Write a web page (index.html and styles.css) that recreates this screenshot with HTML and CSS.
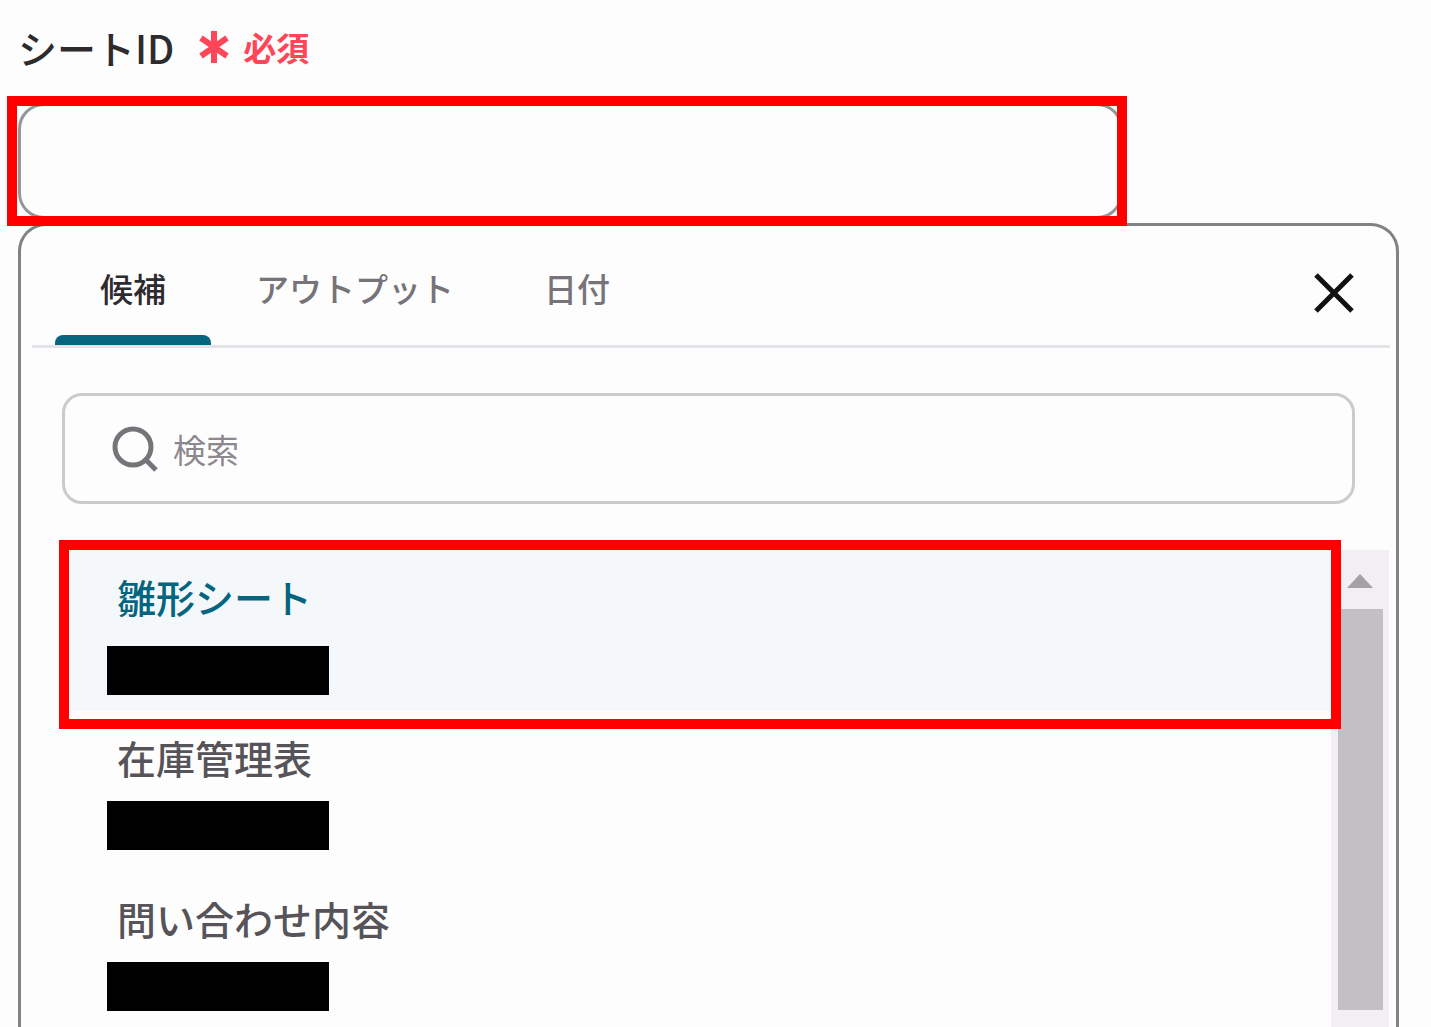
FILE: index.html
```html
<!DOCTYPE html>
<html lang="ja">
<head>
<meta charset="utf-8">
<meta name="viewport" content="width=device-width, initial-scale=1">
<title>シートID</title>
<link rel="stylesheet" href="styles.css">
</head>
<body>
<main class="page">
  <div class="label-row">
    <label class="label" for="sheet-id">シートID</label>
    <span class="required">
      <svg class="required-mark" viewBox="0 0 30 34" aria-hidden="true"><path d="M15 1v32M2 8l26 18M28 8L2 26"/></svg>
      必須
    </span>
  </div>
  <div class="field marked">
    <input class="field-input" id="sheet-id" type="text" required>
  </div>

  <section class="panel">
    <header class="panel-header">
      <div class="tabs" role="tablist">
        <button class="tab tab-active" type="button" role="tab" aria-selected="true">候補</button>
        <button class="tab" type="button" role="tab" aria-selected="false">アウトプット</button>
        <button class="tab" type="button" role="tab" aria-selected="false">日付</button>
      </div>
      <button class="close" type="button" aria-label="閉じる">
        <svg class="close-icon" viewBox="0 0 40 40" aria-hidden="true"><path d="M2 2l36 36M38 2L2 38"/></svg>
      </button>
    </header>

    <div class="search">
      <svg class="search-icon" viewBox="0 0 46 46" aria-hidden="true"><circle cx="21" cy="21" r="18"/><path d="M33 33l11 11"/></svg>
      <input class="search-input" type="search" placeholder="検索" aria-label="検索">
    </div>

    <div class="results">
      <ul class="options">
        <li class="option option-selected marked">
          <button class="option-button" type="button">雛形シート<span class="redacted"></span></button>
        </li>
        <li class="option">
          <button class="option-button" type="button">在庫管理表<span class="redacted"></span></button>
        </li>
        <li class="option">
          <button class="option-button" type="button">問い合わせ内容<span class="redacted"></span></button>
        </li>
      </ul>
      <div class="scrollbar" aria-hidden="true">
        <svg class="scroll-arrow" viewBox="0 0 26 14"><path d="M13 0l13 14H0z"/></svg>
        <div class="scroll-thumb"></div>
      </div>
    </div>
  </section>
</main>
</body>
</html>
```

FILE: styles.css
```css
* {
  box-sizing: border-box;
}

body {
  margin: 0;
  background: #fefdfe;
  color: #2d2b2e;
  font-family: "Noto Sans CJK JP", sans-serif;
}

button,
input {
  margin: 0;
  padding: 0;
  border: 0;
  background: none;
  color: inherit;
  font: inherit;
}

.page {
  display: flex;
  flex-direction: column;
  height: 100vh;
  padding: 0 32px 0 18px;
  overflow: hidden;
}

.label-row {
  display: flex;
  align-items: center;
  gap: 25px;
  height: 96px;
  flex: none;
  padding-bottom: 2px;
}

.label {
  font-size: 39px;
  font-weight: 500;
  line-height: 48px;
}

.required {
  display: flex;
  align-items: center;
  gap: 14px;
  color: #ff4658;
  font-size: 33px;
  font-weight: 700;
  line-height: 48px;
}

.required-mark {
  width: 30px;
  height: 34px;
  fill: none;
  stroke: currentColor;
  stroke-width: 6;
}

/* Red frame drawn over the element it points out */
.marked {
  position: relative;
}

.marked::after {
  content: "";
  position: absolute;
  z-index: 2;
  border: 10px solid #ff0000;
  pointer-events: none;
}

.field {
  flex: none;
  width: 80%;
  margin: 7px 0 4px;
}

.field::after {
  inset: -7px -4px -7px -11px;
}

.field-input {
  display: block;
  width: 100%;
  height: 116px;
  padding: 0 32px;
  border: 3px solid #97959a;
  border-radius: 26px;
  font-size: 39px;
}

.panel {
  display: flex;
  flex: 1;
  flex-direction: column;
  min-height: 0;
  border: 3px solid #838185;
  border-bottom: 0;
  border-radius: 28px 28px 0 0;
}

.panel-header {
  display: flex;
  flex: none;
  justify-content: space-between;
  height: 122px;
  margin: 0 6px 0 11px;
  padding: 0 34px 0 23px;
  border-bottom: 3px solid #e5e3e7;
}

.tabs {
  display: flex;
}

.tab {
  padding: 14px 45px 0;
  border-bottom: 10px solid transparent;
  color: #767478;
  font-size: 33px;
  font-weight: 500;
  line-height: 48px;
}

.tab-active {
  position: relative;
  color: #2d2b2e;
}

.tab-active::after {
  content: "";
  position: absolute;
  inset: auto 0 -10px;
  height: 10px;
  border-radius: 8px 8px 0 0;
  background: #05657f;
}

.close {
  align-self: center;
  padding-top: 14px;
}

.close-icon {
  display: block;
  width: 44px;
  height: 40px;
  fill: none;
  stroke: #111111;
  stroke-width: 5;
}

.search {
  display: flex;
  flex: none;
  align-items: center;
  gap: 15px;
  height: 111px;
  margin: 45px 41px 46px;
  padding: 0 47px;
  border: 3px solid #cccacd;
  border-radius: 20px;
}

.search-icon {
  flex: none;
  width: 46px;
  height: 46px;
  fill: none;
  stroke: #767478;
  stroke-width: 5;
}

.search-input {
  flex: 1;
  min-width: 0;
  font-size: 33px;
  line-height: 48px;
}

.search-input::placeholder {
  color: #8b898d;
  opacity: 1;
}

.results {
  display: flex;
  flex: 1;
  min-height: 0;
  padding: 0 7px 0 48px;
}

.options {
  flex: 1;
  margin: 0;
  padding: 0;
  list-style: none;
}

.option {
  height: 161px;
}

.option::after {
  inset: -10px -10px -18px;
}

.option-button {
  display: flex;
  flex-direction: column;
  justify-content: flex-start;
  gap: 20px;
  width: 100%;
  height: 100%;
  padding: 22px 38px 0 48px;
  color: #565458;
  font-size: 39px;
  font-weight: 500;
  line-height: 48px;
  text-align: left;
}

.option-selected {
  background: #f4f8fb;
}

.option-selected .option-button {
  gap: 26px;
  color: #05657f;
}

.redacted {
  width: 222px;
  height: 49px;
  margin-left: -10px;
  background: #000000;
}

.scrollbar {
  display: flex;
  flex: none;
  flex-direction: column;
  align-items: center;
  gap: 21px;
  width: 58px;
  padding: 24px 0 17px;
  background: #f1eff2;
}

.scroll-arrow {
  width: 26px;
  height: 14px;
  fill: #a3a1a4;
}

.scroll-thumb {
  flex: 1;
  width: 45px;
  background: #c2c0c3;
}
```
